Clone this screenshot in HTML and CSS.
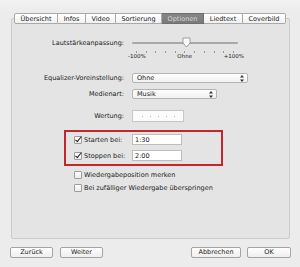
FILE: index.html
```html
<!DOCTYPE html>
<html lang="de">
<head>
    <meta charset="UTF-8">
    <title>Optionen</title>
    <link rel="stylesheet" href="styles.css">
</head>
<body>
    <div class="tabs">
        <div class="tab">Übersicht</div>
        <div class="tab">Infos</div>
        <div class="tab">Video</div>
        <div class="tab">Sortierung</div>
        <div class="tab active">Optionen</div>
        <div class="tab">Liedtext</div>
        <div class="tab">Coverbild</div>
    </div>

    <div class="panel">
        <div class="row slider-row">
            <div class="label">Lautstärkeanpassung:</div>
            <div class="slider">
                <div class="track"></div>
                <svg class="knob" width="9" height="11" viewBox="0 0 9 11">
                    <path d="M1 1 H8 V6 L4.5 10 L1 6 Z" fill="#fafafa" stroke="#8a8a8a" stroke-width="0.8"/>
                </svg>
            </div>
        </div>
        <div class="ticks">
            <span></span><span></span><span></span><span></span><span></span><span></span>
            <span></span><span></span><span></span><span></span><span></span>
        </div>
        <div class="tick-labels">
            <span>-100%</span>
            <span>Ohne</span>
            <span>+100%</span>
        </div>

        <div class="row popup-row eq-row">
            <div class="label">Equalizer-Voreinstellung:</div>
            <div class="popup popup-eq">
                <span>Ohne</span>
                <svg width="4" height="7" viewBox="0 0 4 7"><path d="M2 0 L4 2.5 H0 Z M2 7 L4 4.5 H0 Z" fill="#333"/></svg>
            </div>
        </div>

        <div class="row popup-row media-row">
            <div class="label">Medienart:</div>
            <div class="popup popup-media">
                <span>Musik</span>
                <svg width="4" height="7" viewBox="0 0 4 7"><path d="M2 0 L4 2.5 H0 Z M2 7 L4 4.5 H0 Z" fill="#333"/></svg>
            </div>
        </div>

        <div class="row rating-row">
            <div class="label">Wertung:</div>
            <div class="rating">
                <span></span><span></span><span></span><span></span><span></span>
            </div>
        </div>

        <div class="highlight">
            <div class="check-row">
                <label class="check-label"><span class="box checked"></span>Starten bei:</label>
                <div class="field">1:30</div>
            </div>
            <div class="check-row">
                <label class="check-label"><span class="box checked"></span>Stoppen bei:</label>
                <div class="field">2:00</div>
            </div>
        </div>

        <div class="option"><span class="box"></span>Wiedergabeposition merken</div>
        <div class="option"><span class="box"></span>Bei zufälliger Wiedergabe überspringen</div>
    </div>

    <div class="buttons">
        <div class="btn">Zurück</div>
        <div class="btn btn-next">Weiter</div>
        <div class="spacer"></div>
        <div class="btn btn-cancel">Abbrechen</div>
        <div class="btn btn-ok">OK</div>
    </div>
</body>
</html>
```

FILE: styles.css
```css
body {
    margin: 0;
    padding-top: 13px;
    width: 300px;
    height: 267px;
    box-sizing: border-box;
    background: linear-gradient(#f2f2f2, #ececec 12px);
    font-family: "DejaVu Sans", sans-serif;
    font-size: 6.5px;
    color: #1a1a1a;
    overflow: hidden;
}

.tabs {
    display: flex;
    margin-left: 14px;
    position: relative;
    z-index: 1;
}

.tab {
    height: 11px;
    line-height: 10px;
    background: linear-gradient(#ffffff, #f1f1f1);
    border: 1px solid #a9a9a9;
    border-left: none;
    box-sizing: border-box;
    text-align: center;
    white-space: nowrap;
}

.tab:nth-child(1) { width: 44px; border-left: 1px solid #a9a9a9; border-radius: 2px 0 0 2px; }
.tab:nth-child(2) { width: 28px; }
.tab:nth-child(3) { width: 30px; }
.tab:nth-child(4) { width: 46px; }
.tab:nth-child(5) { width: 42px; }
.tab:nth-child(6) { width: 39px; }
.tab:nth-child(7) { width: 43px; border-radius: 0 2px 2px 0; }

.tab.active {
    background: linear-gradient(#858585, #7a7a7a);
    color: #d8d8d8;
    border-color: #6e6e6e;
}

.panel {
    margin: -6px 10px 0 11px;
    height: 221px;
    box-sizing: border-box;
    border: 1px solid #cbcbcb;
    border-radius: 2px;
    background: #e4e4e4;
    padding-top: 18px;
}

.row {
    display: flex;
    align-items: center;
}

.label {
    width: 112px;
    margin-right: 8px;
    text-align: right;
    white-space: nowrap;
}

.slider-row {
    height: 12px;
}

.slider {
    position: relative;
    width: 106px;
    height: 12px;
}

.track {
    position: absolute;
    left: 0;
    right: 0;
    top: 5px;
    height: 2px;
    border-radius: 1px;
    background: #a8a8a8;
}

.knob {
    position: absolute;
    left: 50px;
    top: 0;
}

.ticks {
    display: flex;
    justify-content: space-between;
    margin-left: 124px;
    width: 98px;
    height: 4px;
    align-items: flex-end;
}

.ticks span {
    width: 1px;
    height: 2px;
    background: #9a9a9a;
}

.tick-labels {
    display: flex;
    justify-content: space-between;
    margin-left: 116px;
    width: 116px;
    height: 7px;
    line-height: 7px;
    font-size: 5.5px;
}

.popup {
    display: flex;
    align-items: center;
    justify-content: space-between;
    height: 10px;
    box-sizing: border-box;
    padding: 0 3px 0 4px;
    background: linear-gradient(#ffffff, #f0f0f0);
    border: 1px solid #b4b4b4;
    border-radius: 2px;
}

.eq-row {
    margin-top: 13px;
}

.popup-eq {
    width: 116px;
}

.media-row {
    margin-top: 6px;
}

.popup-media {
    width: 85px;
}

.rating-row {
    margin-top: 11px;
    height: 12px;
}

.rating {
    display: flex;
    align-items: center;
    gap: 7px;
    width: 52px;
    height: 12px;
    box-sizing: border-box;
    padding-left: 9px;
    background: #fbfbfb;
    border: 1px solid #c6c6c6;
}

.rating span {
    width: 1px;
    height: 1px;
    background: #b0b0b0;
}

.highlight {
    margin: 8px 0 0 52px;
    width: 159px;
    height: 36px;
    box-sizing: border-box;
    border: 2px solid #c1272d;
    padding: 2px 0 0 8px;
}

.check-row {
    display: flex;
    align-items: center;
    height: 11px;
}

.check-row + .check-row {
    margin-top: 5px;
}

.check-label {
    display: flex;
    align-items: center;
    width: 58px;
}

.box {
    position: relative;
    width: 6px;
    height: 6px;
    margin-right: 2px;
    border: 1px solid #9d9d9d;
    border-radius: 1px;
    background: linear-gradient(#ffffff, #ececec);
    flex: none;
}

.box.checked::after {
    content: "";
    position: absolute;
    left: 2px;
    top: -2px;
    width: 2px;
    height: 6px;
    border: solid #222;
    border-width: 0 1.3px 1.3px 0;
    transform: rotate(40deg);
}

.field {
    width: 50px;
    height: 11px;
    line-height: 11px;
    box-sizing: border-box;
    padding-left: 2px;
    background: #ffffff;
    border: 1px solid #bdbdbd;
}

.option {
    display: flex;
    align-items: center;
    margin-left: 62px;
    height: 10px;
    margin-top: 3px;
}

.highlight + .option {
    margin-top: 4px;
}

.buttons {
    display: flex;
    margin: 8px 9px 0 10px;
}

.btn {
    width: 43px;
    height: 11px;
    line-height: 9px;
    box-sizing: border-box;
    text-align: center;
    background: linear-gradient(#ffffff, #eeeeee);
    border: 1px solid #a4a4a4;
    border-radius: 2px;
}

.btn-next {
    margin-left: 7px;
}

.spacer {
    flex: 1;
}

.btn-cancel {
    width: 50px;
}

.btn-ok {
    margin-left: 6px;
    width: 44px;
}
```
